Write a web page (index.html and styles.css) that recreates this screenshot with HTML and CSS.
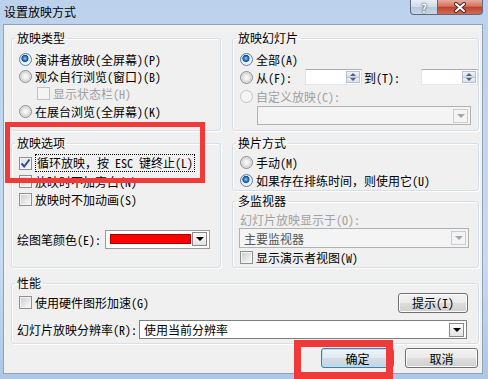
FILE: index.html
```html
<!DOCTYPE html>
<html lang="zh-CN">

<head>
    <meta charset="UTF-8">
    <title>设置放映方式</title>
    <link rel="stylesheet" href="styles.css">
</head>

<body>

    <div class="window">
        <div class="titlebar">
            <span class="title">设置放映方式</span>
            <div class="caption-btns">
                <span class="cap help">?</span>
                <span class="cap close">
                    <svg width="14" height="11" viewBox="0 0 14 11">
                        <path d="M3 2 L11 9 M11 2 L3 9" stroke="#4a2a24" stroke-width="4" stroke-linecap="round" />
                        <path d="M3 2 L11 9 M11 2 L3 9" stroke="#fff" stroke-width="2" stroke-linecap="round" />
                    </svg>
                </span>
            </div>
        </div>

        <div class="client">
            <div class="cols">
                <!-- left column -->
                <div class="col">
                    <fieldset class="group g-type">
                        <legend>放映类型</legend>
                        <div class="row"><span class="radio on"></span>演讲者放映(全屏幕)(P)</div>
                        <div class="row"><span class="radio"></span>观众自行浏览(窗口)(B)</div>
                        <div class="row sub disabled"><span class="check off"></span>显示状态栏(H)</div>
                        <div class="row last"><span class="radio"></span>在展台浏览(全屏幕)(K)</div>
                    </fieldset>

                    <fieldset class="group g-opts">
                        <legend>放映选项</legend>
                        <div class="row tall"><span class="check on">
                                <svg width="11" height="11" viewBox="0 0 11 11">
                                    <path d="M1.5 5.5 L4.2 8.5 L9.5 1.5" fill="none" stroke="#2b4a8c" stroke-width="2" />
                                </svg></span><span class="focus">循环放映，按 ESC 键终止(L)</span></div>
                        <div class="row tall"><span class="check"></span>放映时不加旁白(N)</div>
                        <div class="row tall"><span class="check"></span>放映时不加动画(S)</div>
                        <div class="pen-row">
                            <span>绘图笔颜色(E):</span>
                            <span class="color-pick">
                                <span class="swatch"></span>
                                <span class="drop-btn"><i class="tri"></i></span>
                            </span>
                        </div>
                    </fieldset>
                </div>

                <!-- right column -->
                <div class="col">
                    <fieldset class="group g-show">
                        <legend>放映幻灯片</legend>
                        <div class="row r1"><span class="radio on"></span>全部(A)</div>
                        <div class="row r2">
                            <span class="radio"></span>从(F):
                            <span class="spin first"><span class="spin-btns"><i class="up"></i><i class="down"></i></span></span>
                            <span class="to">到(T):</span>
                            <span class="spin"><span class="spin-btns"><i class="up"></i><i class="down"></i></span></span>
                        </div>
                        <div class="row r3 disabled"><span class="radio off"></span>自定义放映(C):</div>
                        <div class="combo combo-off custom"><span class="drop-btn"><i class="tri"></i></span></div>
                    </fieldset>

                    <fieldset class="group g-switch">
                        <legend>换片方式</legend>
                        <div class="row tall"><span class="radio"></span>手动(M)</div>
                        <div class="row tall"><span class="radio on"></span>如果存在排练时间，则使用它(U)</div>
                    </fieldset>

                    <fieldset class="group g-mon">
                        <legend>多监视器</legend>
                        <div class="row tall disabled">幻灯片放映显示于(O):</div>
                        <div class="combo combo-off monitor">主要监视器<span class="drop-btn"><i class="tri"></i></span></div>
                        <div class="row tall"><span class="check"></span>显示演示者视图(W)</div>
                    </fieldset>
                </div>
            </div>

            <fieldset class="group g-perf">
                <legend>性能</legend>
                <div class="perf-row">
                    <span class="row"><span class="check"></span>使用硬件图形加速(G)</span>
                    <button class="btn hint">提示(I)</button>
                </div>
                <div class="res-row">
                    <span>幻灯片放映分辨率(R):</span>
                    <div class="combo res">使用当前分辨率<span class="drop-btn"><i class="tri"></i></span></div>
                </div>
            </fieldset>

            <div class="actions">
                <button class="btn default">确定</button>
                <button class="btn">取消</button>
            </div>
        </div>

        <!-- red highlight marks drawn over the dialog -->
        <div class="mark mark-loop"></div>
        <div class="mark mark-ok"></div>
    </div>

</body>

</html>
```

FILE: styles.css
```css
* {
    box-sizing: border-box;
}

body {
    margin: 0;
    font-family: "Noto Sans Mono CJK SC", "Noto Sans CJK SC", sans-serif;
    font-size: 12px;
    color: #000;
}

.window {
    position: relative;
    width: 488px;
    height: 379px;
    background: linear-gradient(#bcd2ec, #c8daef 70%, #aec7e5);
    display: flex;
    flex-direction: column;
    overflow: hidden;
}

.titlebar {
    height: 24px;
    display: flex;
    justify-content: space-between;
    align-items: flex-start;
    padding-left: 4px;
    flex: none;
}

.title {
    line-height: 23px;
}

.caption-btns {
    display: flex;
    margin-right: 5px;
}

.cap {
    height: 15px;
    display: flex;
    align-items: center;
    justify-content: center;
    border: 1px solid #5c6b80;
    border-top: none;
}

.help {
    width: 28px;
    border-radius: 0 0 0 4px;
    background: linear-gradient(#e7eef7, #cfdbe8 50%, #b7c8dc 51%, #c9d7e6);
    color: #fff;
    font-weight: bold;
    font-size: 12px;
    text-shadow: 0 0 2px #3b4a5e, 0 0 1px #3b4a5e;
}

.close {
    width: 45px;
    border-left: none;
    border-radius: 0 0 4px 0;
    background: linear-gradient(#e8ab9c, #d5735f 45%, #c2422e 50%, #d06a55);
}

.client {
    flex: 1;
    margin: 0 5px 5px 3px;
    background: #f0f0f0;
    border: 1px solid #8fa3bb;
    padding: 6px 0 0 7px;
}

.cols {
    display: grid;
    grid-template-columns: 210px 247px;
    column-gap: 11px;
}

.col {
    display: flex;
    flex-direction: column;
}

.group {
    margin: 0;
    padding: 0 0 0 7px;
    min-width: 0;
    border: 1px solid #d5dfe5;
    border-radius: 3px;
    box-shadow: inset 1px 1px 0 #fff, 1px 1px 0 #fff;
}

.group legend {
    padding: 0 2px;
    margin-left: -4px;
    line-height: 14px;
}

.g-type,
.g-show {
    height: 100px;
    padding-top: 6px;
}

.g-opts {
    height: 132px;
    margin-top: 5px;
    padding-top: 4px;
}

.g-switch {
    height: 55px;
    margin-top: 5px;
    padding-top: 3px;
}

.g-mon {
    height: 74px;
    margin-top: 3px;
    padding-top: 2px;
}

.g-perf {
    width: 468px;
    height: 68px;
    margin-top: 8px;
    padding-top: 2px;
}

.row {
    display: flex;
    align-items: center;
    height: 17px;
    white-space: nowrap;
}

.row.tall {
    height: 18px;
}

.row.last {
    height: 18px;
}

.row.sub {
    padding-left: 18px;
}

.disabled {
    color: #a0a0a0;
}

.radio {
    width: 13px;
    height: 13px;
    flex: none;
    margin-right: 3px;
    border-radius: 50%;
    border: 1px solid #8c8c8c;
    background: radial-gradient(circle at 50% 50%, #fafafa 0, #f0f0f0 2.5px, #d4d4d4 4.5px, #f6f6f6 6px);
}

.radio.on {
    border-color: #5a7ea8;
    background: radial-gradient(circle at 45% 40%, #9fd6fa 0, #3a8ad4 1.6px, #1a5496 3px, #1a5496 3.3px, #dce6ef 3.8px, #f6f6f6 6px);
}

.radio.off {
    border-color: #c4c4c4;
    background: #f4f4f4;
}

.check {
    width: 13px;
    height: 13px;
    flex: none;
    margin-right: 3px;
    border: 1px solid #8e8f8f;
    background: linear-gradient(135deg, #c8cbcf, #eeeeee 70%, #f7f7f7);
    box-shadow: inset 0 0 0 1px #f4f4f4;
    display: flex;
    align-items: center;
    justify-content: center;
}

.check.on {
    background: linear-gradient(135deg, #dde1e6, #f6f6f6);
}

.check.off {
    border-color: #c2c2c2;
    background: #f4f4f4;
}

.focus {
    border: 1px dotted #000;
    padding: 0 1px;
    line-height: 16px;
}

.pen-row {
    display: flex;
    align-items: center;
    height: 20px;
    margin-top: 21px;
    margin-left: -2px;
}

.color-pick {
    display: flex;
    align-items: center;
    width: 105px;
    height: 19px;
    margin-left: 4px;
    border: 1px solid #9a9a9a;
    background: #fff;
    padding: 0 2px 0 4px;
}

.swatch {
    width: 81px;
    height: 10px;
    background: #ff0000;
    border: 1px solid #b00000;
}

.drop-btn {
    margin-left: auto;
    width: 15px;
    height: 14px;
    border: 1px solid #8a8a8a;
    background: linear-gradient(#fbfbfb, #e4e4e4);
    display: flex;
    align-items: center;
    justify-content: center;
}

.tri {
    width: 0;
    height: 0;
    border-left: 4px solid transparent;
    border-right: 4px solid transparent;
    border-top: 4px solid #000;
}

.r1 {
    height: 17px;
}

.r2 {
    height: 18px;
}

.r3 {
    height: 20px;
}

.spin {
    display: flex;
    justify-content: flex-end;
    width: 59px;
    height: 16px;
    margin-left: 13px;
    border: 1px solid #abadb3;
    border-color: #abadb3 #dbdfe6 #e3e9ef #e2e3ea;
    background: #fff;
    padding: 1px;
}

.to {
    margin-left: 2px;
    width: 46px;
}

.spin-btns {
    width: 14px;
    display: flex;
    flex-direction: column;
}

.spin-btns i {
    flex: 1;
    display: flex;
    align-items: center;
    justify-content: center;
    background: linear-gradient(#f2f5f9, #d6dee8);
    border: 1px solid #b6c1cf;
}

.spin-btns .up {
    border-bottom: none;
}

.spin-btns .up::after,
.spin-btns .down::after {
    content: "";
    border-left: 3px solid transparent;
    border-right: 3px solid transparent;
}

.spin-btns .up::after {
    border-bottom: 3px solid #4d6185;
}

.spin-btns .down::after {
    border-top: 3px solid #4d6185;
}

.combo {
    display: flex;
    align-items: center;
    height: 19px;
    border: 1px solid #7f7f7f;
    background: #fff;
    padding: 0 2px 0 4px;
    white-space: nowrap;
}

.combo-off {
    border-color: #adb2b5;
    background: #f4f4f4;
    color: #555;
}

.combo-off .drop-btn {
    border-color: #c9cdd0;
    background: #f4f4f4;
}

.combo-off .tri {
    border-top-color: #a6a6a6;
}

.custom {
    width: 214px;
    margin-left: 17px;
}

.monitor {
    width: 230px;
    height: 20px;
    margin-left: -1px;
}

.perf-row {
    display: flex;
    align-items: center;
    justify-content: space-between;
    height: 21px;
    padding-right: 10px;
}

.res-row {
    display: flex;
    align-items: center;
    margin-top: 7px;
    margin-left: -2px;
}

.res {
    width: 328px;
    margin-left: 2px;
}

.btn {
    font: inherit;
    height: 20px;
    width: 73px;
    padding: 0;
    border: 1px solid #707070;
    border-radius: 3px;
    background: linear-gradient(#f2f2f2, #ebebeb 48%, #dddddd 52%, #cfcfcf);
    box-shadow: inset 0 0 0 1px #fcfcfc;
    color: #000;
}

.hint {
    width: 70px;
}

.btn.default {
    border-color: #3c7fb1;
    background: linear-gradient(#eef3f8, #e3eaf1 48%, #d3dde7 52%, #c6d2de);
    box-shadow: inset 0 0 0 1px #b9e0f7;
}

.actions {
    display: flex;
    justify-content: flex-end;
    gap: 11px;
    width: 468px;
    margin-top: 4px;
    padding-right: 1px;
}

/* highlight marks */
.mark {
    position: absolute;
    border: 5px solid #f03a3a;
}

.mark-loop {
    left: 5px;
    top: 122px;
    width: 200px;
    height: 61px;
}

.mark-ok {
    left: 294px;
    top: 340px;
    width: 99px;
    height: 39px;
    border-width: 7px;
}
```
